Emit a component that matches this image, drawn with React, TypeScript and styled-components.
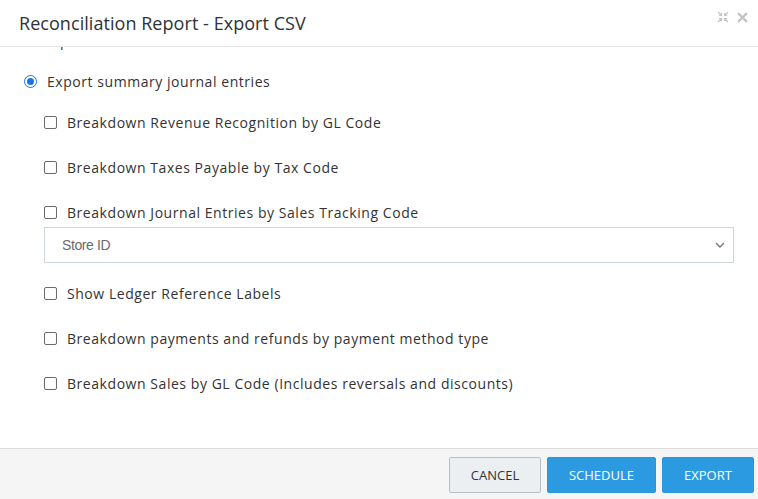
import React from "react";
import styled, { createGlobalStyle } from "styled-components";

const G = createGlobalStyle`
  body { margin: 0; background: #fff; font-family: "Open Sans", "Noto Sans", sans-serif; }
`;
const Modal = styled.div`width: 758px; height: 499px; display: flex; flex-direction: column; overflow: hidden;`;
const Header = styled.div`
  height: 46px; border-bottom: 1px solid #e6e6e6; display: flex; align-items: center;
  padding: 0 20px 0 19px; justify-content: space-between;
`;
const Title = styled.div`font-size: 18px; color: #2d3338; letter-spacing: 0.05px;`;
const Icons = styled.div`display: flex; gap: 8px; align-items: center; margin-top: -12px; margin-right: -10px;`;
const Body = styled.div`flex: 1; position: relative; padding: 24px 24px 0 24px; overflow: hidden;`;
const Cut = styled.div`position: absolute; top: -16px; left: 60px; font-size: 14px; color: #333; line-height: 20px;`;
const Row = styled.label<{ $indent?: boolean }>`
  display: flex; align-items: center; gap: 10px; height: 20px; font-size: 14px; color: #333;
  letter-spacing: 0.55px;
  margin-left: ${p => (p.$indent ? "20px" : "0")}; margin-bottom: ${p => (p.$indent ? "25px" : "21px")};
`;
const Check = styled.span`width: 11px; height: 11px; border: 1px solid #6b6b6b; border-radius: 2px; background: #fff;`;
const Radio = styled.span`
  width: 11px; height: 11px; border-radius: 50%; border: 1px solid #1a73e8; position: relative;
  &::after { content: ""; position: absolute; inset: 2px; border-radius: 50%; background: #1a73e8; }
`;
const Select = styled.div`
  margin: -20px 0 20px 20px; height: 34px; border: 1px solid #cfd6dc; display: flex; align-items: center;
  justify-content: space-between; padding: 0 8px 0 17px; font-family: "Liberation Sans", Arial, sans-serif;
  font-size: 14px; color: #6b6b6b; letter-spacing: -0.4px;
`;
const Footer = styled.div`
  height: 50px; background: #f5f5f5; border-top: 1px solid #dcdcdc; display: flex; justify-content: flex-end;
  align-items: center; gap: 6px; padding: 0 4px 0 0;
`;
const Btn = styled.button<{ $primary?: boolean; $w: number }>`
  width: ${p => p.$w}px; height: 36px; border-radius: 2px; font-family: "Open Sans", sans-serif; font-size: 13px;
  border: 1px solid ${p => (p.$primary ? "#2c96dd" : "#b8bfc4")};
  background: ${p => (p.$primary ? "#2b9ae1" : "#eceff1")}; color: ${p => (p.$primary ? "#fff" : "#333")};
  margin-top: 2px;
`;

const items = [
  "Breakdown Revenue Recognition by GL Code",
  "Breakdown Taxes Payable by Tax Code",
  "Breakdown Journal Entries by Sales Tracking Code",
];
const items2 = [
  "Show Ledger Reference Labels",
  "Breakdown payments and refunds by payment method type",
  "Breakdown Sales by GL Code (Includes reversals and discounts)",
];

export default function App() {
  return (
    <Modal>
      <G />
      <Header>
        <Title>Reconciliation Report - Export CSV</Title>
        <Icons>
          <svg width="12" height="12" viewBox="0 0 12 12" stroke="#c4c4c4" strokeWidth="1.2" fill="none">
            <path d="M1 1l3.5 3.5M2 4.5h2.5V2M11 1L7.5 4.5M7.5 2v2.5H10M1 11l3.5-3.5M2 7.5h2.5V10M11 11L7.5 7.5M7.5 10V7.5H10" />
          </svg>
          <svg width="11" height="11" viewBox="0 0 10 10" stroke="#c4c4c4" strokeWidth="2">
            <path d="M1 1l8 8M9 1L1 9" />
          </svg>
        </Icons>
      </Header>
      <Body>
        <Cut>p</Cut>
        <Row><Radio />Export summary journal entries</Row>
        {items.map(t => <Row $indent key={t}><Check />{t}</Row>)}
        <Select>
          Store ID
          <svg width="10" height="8" viewBox="0 0 10 8" fill="none" stroke="#777" strokeWidth="1.4"><path d="M1 2l4 4 4-4" /></svg>
        </Select>
        {items2.map(t => <Row $indent key={t}><Check />{t}</Row>)}
      </Body>
      <Footer>
        <Btn $w={92}>CANCEL</Btn>
        <Btn $primary $w={109}>SCHEDULE</Btn>
        <Btn $primary $w={92}>EXPORT</Btn>
      </Footer>
    </Modal>
  );
}
